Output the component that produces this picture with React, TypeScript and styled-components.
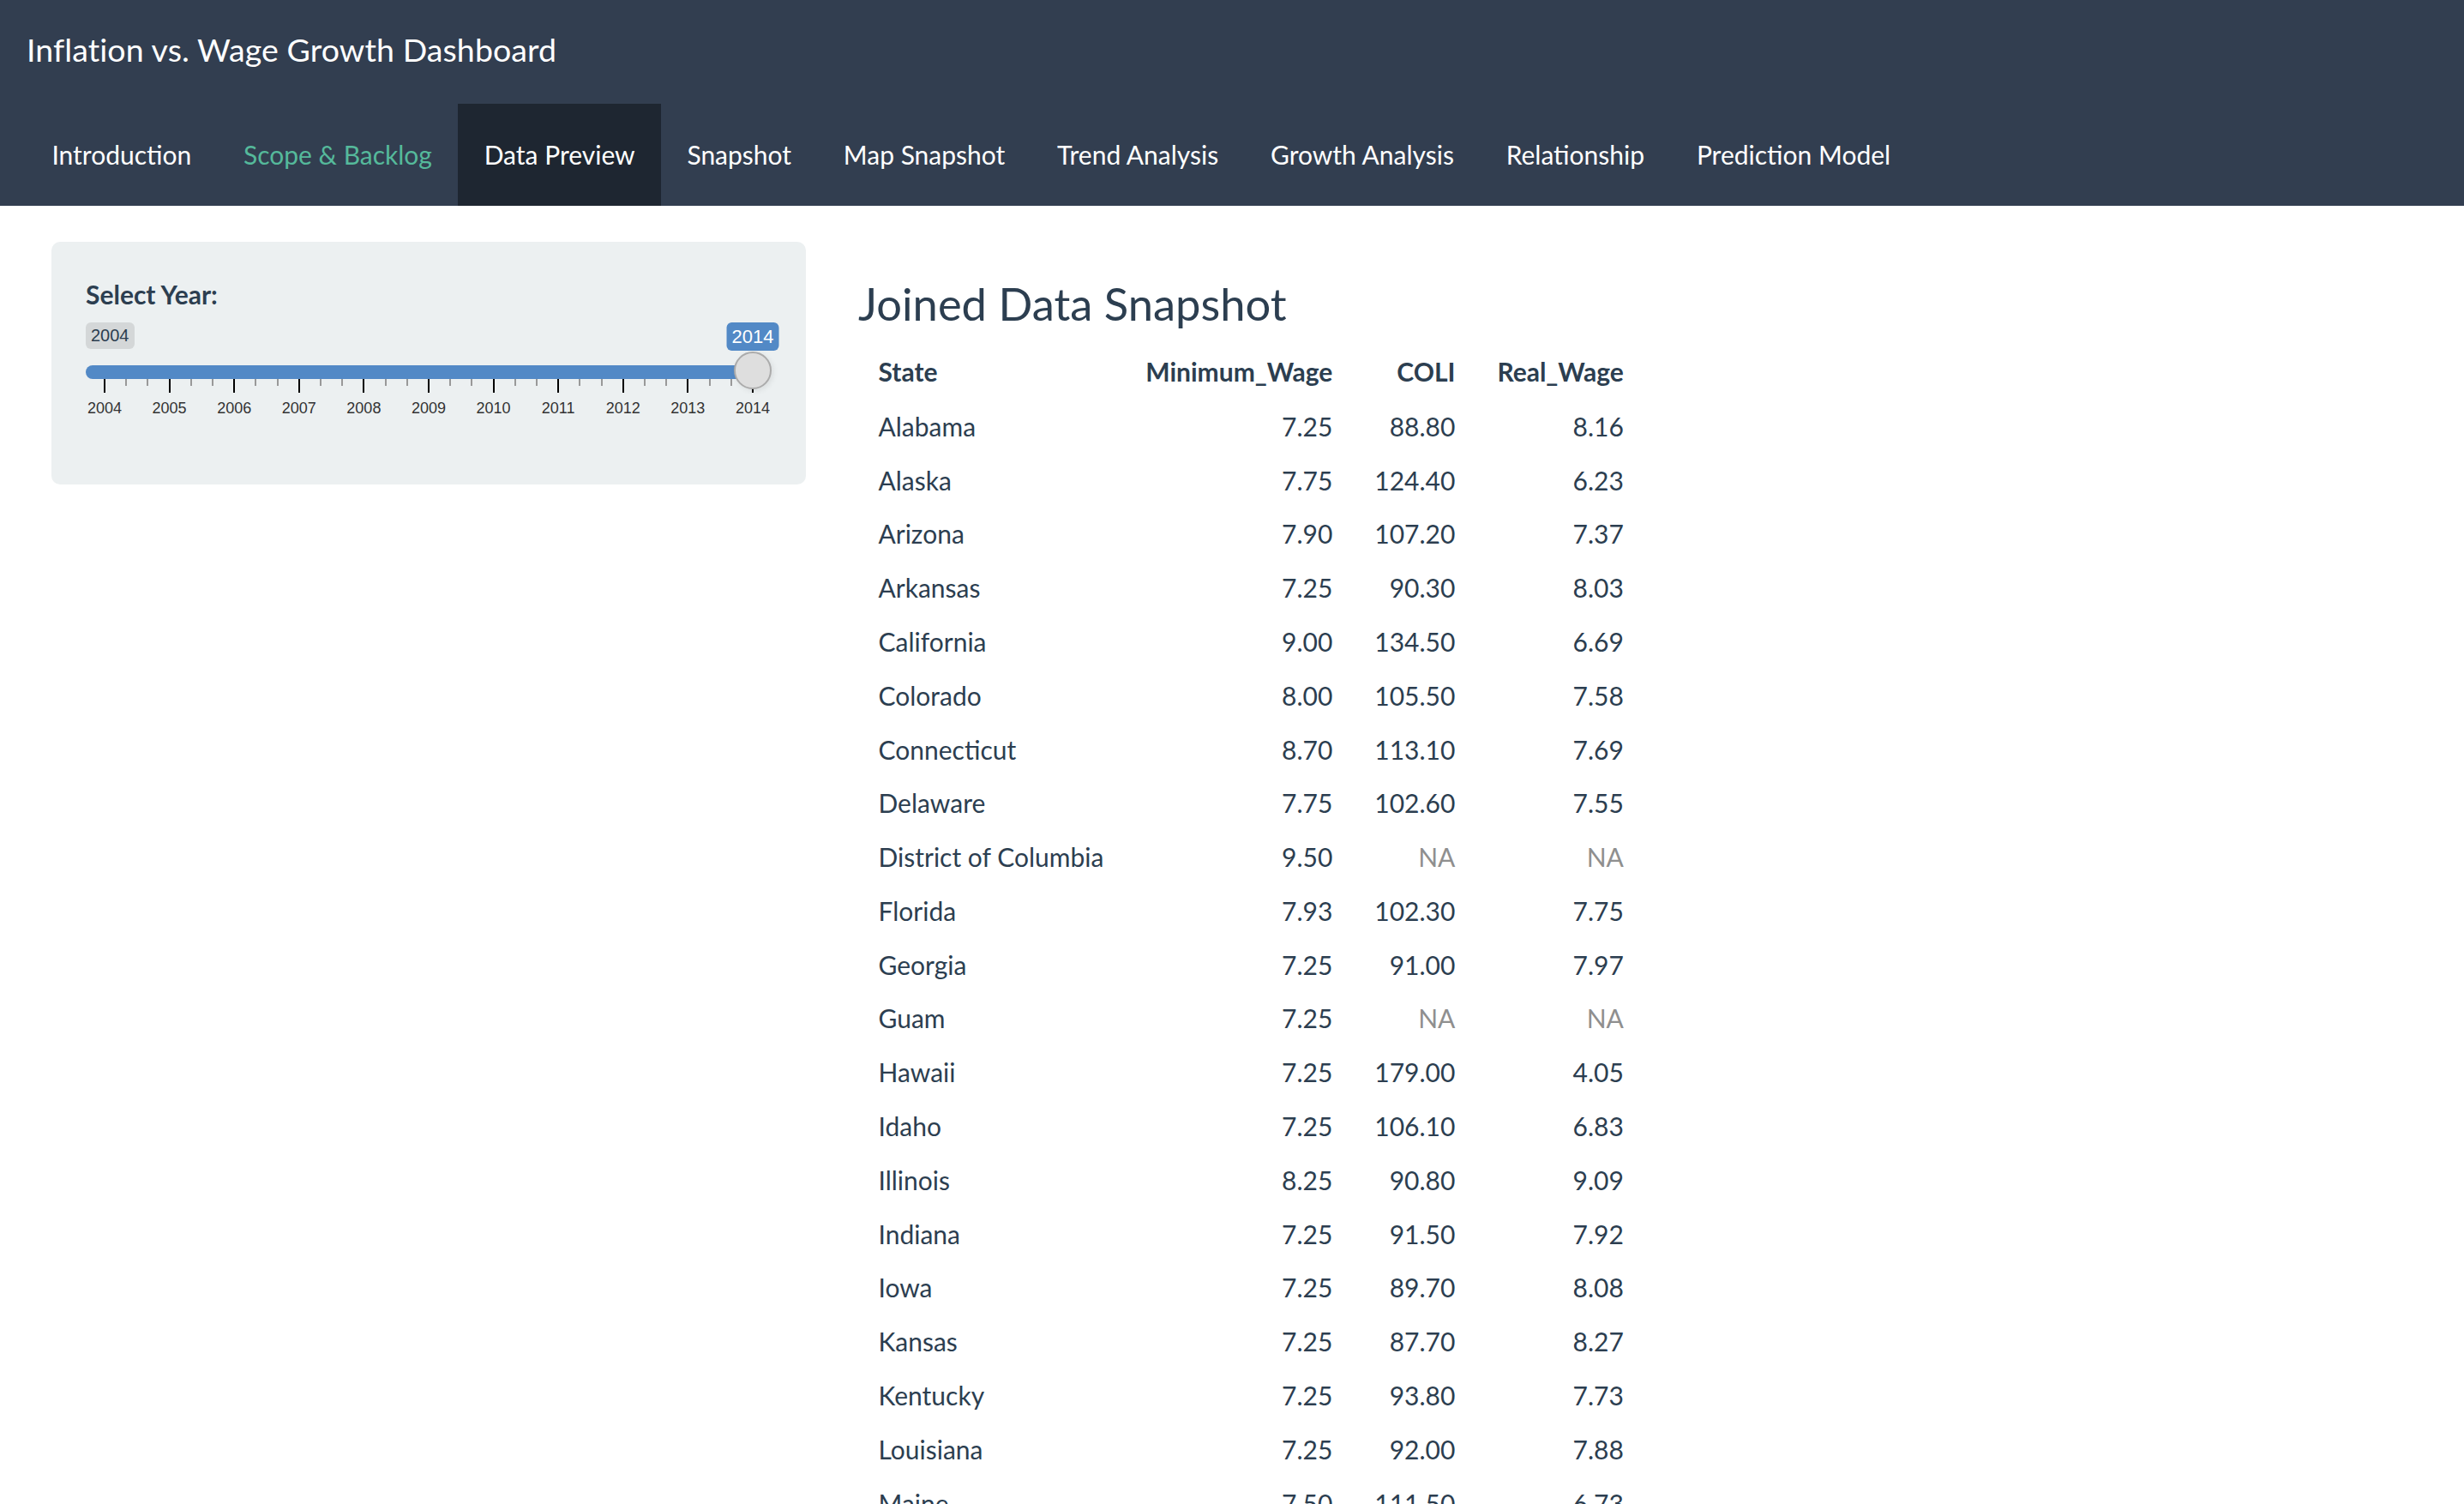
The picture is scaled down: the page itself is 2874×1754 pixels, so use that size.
import React from "react";
import styled, { createGlobalStyle } from "styled-components";

const GlobalStyle = createGlobalStyle`
  html, body {
    margin: 0;
    padding: 0;
    background: #ffffff;
  }
  body {
    font-family: Lato, "Noto Sans", sans-serif;
    color: #2c3e50;
  }
  * {
    box-sizing: border-box;
  }
`;

const Navbar = styled.header`
  background-color: #323e50;
`;

const BrandRow = styled.div`
  height: 121px;
  display: flex;
  align-items: center;
  padding: 0 0 5px 31px;
`;

const Brand = styled.div`
  font-size: 37.5px;
  line-height: 1.5;
  letter-spacing: 0.1px;
  color: #ffffff;
`;

const NavList = styled.nav`
  display: flex;
  height: 119px;
  padding-left: 30px;
`;

const NavLink = styled.a<{ $active?: boolean; $accent?: boolean }>`
  display: flex;
  align-items: center;
  padding: 0 30.4px;
  font-size: 30px;
  line-height: 45px;
  text-decoration: none;
  cursor: pointer;
  color: ${(p) => (p.$accent ? "#55b99b" : "#ffffff")};
  background-color: ${(p) => (p.$active ? "#1e2631" : "transparent")};
`;

const Page = styled.div`
  display: flex;
  align-items: flex-start;
  gap: 61px;
  padding: 42px 0 0 60px;
`;

const Sidebar = styled.aside`
  width: 880px;
  flex: none;
  background-color: #ecf0f1;
  border-radius: 10px;
  padding: 39px 40px 39px;
`;

const FormGroup = styled.div`
  margin-bottom: 30px;
`;

const FieldLabel = styled.label`
  display: block;
  font-size: 30px;
  line-height: 45px;
  font-weight: 700;
  color: #2c3e50;
  margin-bottom: 10px;
`;

/* ion.rangeSlider look-alike */
const Irs = styled.div`
  display: flex;
  flex-direction: column;
  width: 800px;
  font-family: "Liberation Sans", Arial, sans-serif;
`;

const LabelRow = styled.div`
  position: relative;
  display: flex;
  height: 33px;
  margin-bottom: 1px;
`;

const MinLabel = styled.span`
  align-self: flex-start;
  font-size: 20px;
  line-height: 1.333;
  padding: 2px 6px;
  border-radius: 6px;
  color: #2c3e50;
  background: rgba(0, 0, 0, 0.1);
`;

const SingleLabel = styled.span`
  position: absolute;
  top: 0;
  transform: translateX(-50%);
  font-size: 22px;
  line-height: 1.333;
  padding: 2px 6px;
  border-radius: 6px;
  color: #ffffff;
  background: #5289c6;
`;

const Track = styled.div`
  position: relative;
  z-index: 1;
  height: 32px;
`;

const Line = styled.div`
  position: absolute;
  top: 16px;
  left: 0;
  right: 0;
  height: 16px;
  border-radius: 16px;
  background: #ededed;
`;

const Bar = styled.div`
  position: absolute;
  top: 16px;
  left: 0;
  height: 16px;
  border-radius: 16px 0 0 16px;
  background: #5289c6;
`;

const Handle = styled.div`
  position: absolute;
  top: 0;
  width: 44px;
  height: 44px;
  border-radius: 50%;
  border: 2px solid #ababab;
  background: #dedede;
  box-shadow: 2px 2px 6px rgba(0, 0, 0, 0.08);
`;

const TickRow = styled.div<{ $pad: number }>`
  display: flex;
  height: 16px;
  padding-left: ${(p) => p.$pad - 1}px;
`;

const Interval = styled.div<{ $w: number }>`
  flex: none;
  width: ${(p) => p.$w}px;
  display: grid;
  grid-template-columns: repeat(3, 1fr);
  align-items: start;
`;

const Tick = styled.span<{ $small?: boolean }>`
  display: block;
  width: 2px;
  height: ${(p) => (p.$small ? "8px" : "16px")};
  background: ${(p) => (p.$small ? "#999999" : "#000000")};
`;

const GridLabels = styled.div<{ $offset: number }>`
  display: flex;
  margin: 8px 0 0 ${(p) => p.$offset}px;
  padding-bottom: 9px;
`;

const GridText = styled.span<{ $w: number }>`
  flex: none;
  width: ${(p) => p.$w}px;
  text-align: center;
  font-size: 18px;
  line-height: 21px;
  color: #333333;
  white-space: nowrap;
`;

const Main = styled.main`
  flex: 1;
`;

const Heading = styled.h3`
  margin: 40px 0 16px;
  font-size: 52.5px;
  line-height: 1.2;
  font-weight: 400;
  color: #2c3e50;
`;

const Table = styled.table`
  border-collapse: collapse;
  margin-left: -1px;
  font-size: 30px;
  line-height: 45px;
  color: #2c3e50;
`;

const Th = styled.th<{ $num?: boolean }>`
  padding: 10px 24.5px;
  font-weight: 700;
  text-align: ${(p) => (p.$num ? "right" : "left")};
  white-space: nowrap;
`;

const Td = styled.td<{ $num?: boolean; $na?: boolean }>`
  padding: 8.9px 24.5px;
  text-align: ${(p) => (p.$num ? "right" : "left")};
  color: ${(p) => (p.$na ? "#8f8f8f" : "#2c3e50")};
  white-space: nowrap;
`;

const tabs = [
  "Introduction",
  "Scope & Backlog",
  "Data Preview",
  "Snapshot",
  "Map Snapshot",
  "Trend Analysis",
  "Growth Analysis",
  "Relationship",
  "Prediction Model",
];

type Row = [string, string, string, string];

const rows: Row[] = [
  ["Alabama", "7.25", "88.80", "8.16"],
  ["Alaska", "7.75", "124.40", "6.23"],
  ["Arizona", "7.90", "107.20", "7.37"],
  ["Arkansas", "7.25", "90.30", "8.03"],
  ["California", "9.00", "134.50", "6.69"],
  ["Colorado", "8.00", "105.50", "7.58"],
  ["Connecticut", "8.70", "113.10", "7.69"],
  ["Delaware", "7.75", "102.60", "7.55"],
  ["District of Columbia", "9.50", "NA", "NA"],
  ["Florida", "7.93", "102.30", "7.75"],
  ["Georgia", "7.25", "91.00", "7.97"],
  ["Guam", "7.25", "NA", "NA"],
  ["Hawaii", "7.25", "179.00", "4.05"],
  ["Idaho", "7.25", "106.10", "6.83"],
  ["Illinois", "8.25", "90.80", "9.09"],
  ["Indiana", "7.25", "91.50", "7.92"],
  ["Iowa", "7.25", "89.70", "8.08"],
  ["Kansas", "7.25", "87.70", "8.27"],
  ["Kentucky", "7.25", "93.80", "7.73"],
  ["Louisiana", "7.25", "92.00", "7.88"],
  ["Maine", "7.50", "111.50", "6.73"],
];

const MIN_YEAR = 2004;
const MAX_YEAR = 2014;
const WIDTH = 800;
const PAD = 22; // half the handle width
const TRACK = WIDTH - PAD * 2;

const YearSlider = ({ value }: { value: number }) => {
  const years: number[] = [];
  for (let y = MIN_YEAR; y <= MAX_YEAR; y++) years.push(y);
  const step = TRACK / (MAX_YEAR - MIN_YEAR);
  const pos = PAD + ((value - MIN_YEAR) / (MAX_YEAR - MIN_YEAR)) * TRACK;

  return (
    <Irs>
      <LabelRow>
        <MinLabel>{MIN_YEAR}</MinLabel>
        <SingleLabel style={{ left: pos }}>{value}</SingleLabel>
      </LabelRow>
      <Track>
        <Line />
        <Bar style={{ width: pos }} />
        <Handle style={{ left: pos - PAD }} />
      </Track>
      <TickRow $pad={PAD}>
        {years.slice(0, -1).map((y) => (
          <Interval key={y} $w={step}>
            <Tick />
            <Tick $small />
            <Tick $small />
          </Interval>
        ))}
        <Tick />
      </TickRow>
      <GridLabels $offset={PAD - step / 2}>
        {years.map((y) => (
          <GridText key={y} $w={step}>
            {y}
          </GridText>
        ))}
      </GridLabels>
    </Irs>
  );
};

export default function App() {
  return (
    <>
      <GlobalStyle />
      <Navbar>
        <BrandRow>
          <Brand>Inflation vs. Wage Growth Dashboard</Brand>
        </BrandRow>
        <NavList>
          {tabs.map((t) => (
            <NavLink
              key={t}
              $active={t === "Data Preview"}
              $accent={t === "Scope & Backlog"}
            >
              {t}
            </NavLink>
          ))}
        </NavList>
      </Navbar>
      <Page>
        <Sidebar>
          <FormGroup>
            <FieldLabel>Select Year:</FieldLabel>
            <YearSlider value={2014} />
          </FormGroup>
        </Sidebar>
        <Main>
          <Heading>Joined Data Snapshot</Heading>
          <Table>
            <thead>
              <tr>
                <Th>State</Th>
                <Th $num>Minimum_Wage</Th>
                <Th $num>COLI</Th>
                <Th $num>Real_Wage</Th>
              </tr>
            </thead>
            <tbody>
              {rows.map(([state, wage, coli, real]) => (
                <tr key={state}>
                  <Td>{state}</Td>
                  <Td $num>{wage}</Td>
                  <Td $num $na={coli === "NA"}>
                    {coli}
                  </Td>
                  <Td $num $na={real === "NA"}>
                    {real}
                  </Td>
                </tr>
              ))}
            </tbody>
          </Table>
        </Main>
      </Page>
    </>
  );
}
